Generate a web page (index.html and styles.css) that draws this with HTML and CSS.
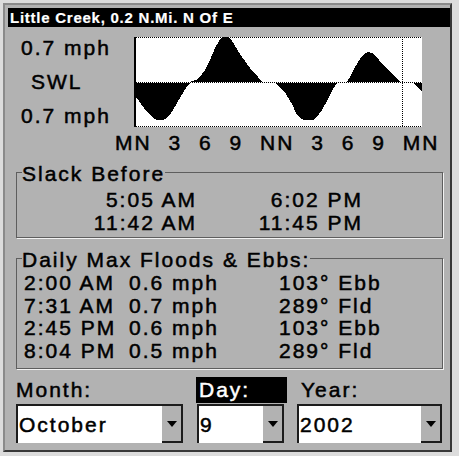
FILE: index.html
```html
<!DOCTYPE html>
<html>
<head>
<meta charset="utf-8">
<title>Tide Currents</title>
<link rel="stylesheet" href="styles.css">
</head>
<body>
<div class="screen">
  <div class="title">Little Creek, 0.2 N.Mi. N Of E</div>
  <div class="chart-row">
    <div class="scale">
      <div>0.7 mph</div>
      <div class="swl">SWL</div>
      <div>0.7 mph</div>
    </div>
    <svg class="chart" width="288" height="90" viewBox="0 0 288 90">
      <rect width="288" height="90" fill="#fff"/>
      <path fill="#000" shape-rendering="crispEdges" d="M0 46 L0 58 L5 64 L10 71 L15 77 L19 81 L23 83 L29 83 L33 81 L37 76 L42 68 L47 59 L52 51 L56 46 Z
        M55 45 L62 43 L66 40 L71 33 L76 23 L81 11 L85 4 L88 0 L95 0 L98 4 L106 17 L116 31 L124 40 L128 45 Z
        M142 46 L152 57 L158 67 L162 76 L166 81 L170 83 L179 83 L183 80 L188 73 L194 62 L199 52 L203 46 Z
        M213 45 L216 40 L221 30 L226 22 L230 17 L234 15 L238 16 L245 23 L252 31 L259 38 L265 44 L267 45 Z
        M279 46 L288 54 L288 46 Z"/>
      <rect x="0" y="0" width="2" height="90" fill="#000"/>
      <path fill="none" stroke="#000" stroke-width="1" stroke-dasharray="1 1" shape-rendering="crispEdges" d="M2 0.5 H288 M2 45.5 H288 M2 89.5 H288 M268.5 0 V90"/>
    </svg>
  </div>
  <div class="axis">MN 3 6 9 NN 3 6 9 MN</div>
  <fieldset class="group slack">
    <legend>Slack Before</legend>
    <div class="rows">
      <span>5:05 AM</span><span>6:02 PM</span>
      <span>11:42 AM</span><span>11:45 PM</span>
    </div>
  </fieldset>
  <fieldset class="group daily">
    <legend>Daily Max Floods &amp; Ebbs:</legend>
    <div class="rows">
      <span>2:00 AM</span><span>0.6 mph</span><span>103° Ebb</span>
      <span>7:31 AM</span><span>0.7 mph</span><span>289° Fld</span>
      <span>2:45 PM</span><span>0.6 mph</span><span>103° Ebb</span>
      <span>8:04 PM</span><span>0.5 mph</span><span>289° Fld</span>
    </div>
  </fieldset>
  <div class="date-row">
    <div class="field month">
      <div class="label">Month:</div>
      <div class="select"><span class="value">October</span><span class="btn"><i class="arrow"></i></span></div>
    </div>
    <div class="field day">
      <div class="label">Day:</div>
      <div class="select"><span class="value">9</span><span class="btn"><i class="arrow"></i></span></div>
    </div>
    <div class="field year">
      <div class="label">Year:</div>
      <div class="select"><span class="value">2002</span><span class="btn"><i class="arrow"></i></span></div>
    </div>
  </div>
</div>
</body>
</html>
```
FILE: styles.css
```css
* { box-sizing: border-box; }

body {
  margin: 0;
  background: #dcdcdc;
  font-family: "Liberation Sans", Arial, sans-serif;
}

.screen {
  margin: 3px 0 0 3px;
  width: 449px;
  height: 449px;
  border: 2px solid;
  border-color: #8a8a8a #383838 #383838 #8a8a8a;
  background: #b2b2b2;
  color: #000;
  font-size: 21px;
  letter-spacing: 2px;
  -webkit-text-stroke-width: 0.5px;
  overflow: hidden;
}

.title {
  margin: 3px 0 0 3px;
  height: 19px;
  line-height: 19px;
  padding-left: 2px;
  background: #000;
  color: #fff;
  font-weight: bold;
  font-size: 15px;
  letter-spacing: 0.75px;
  white-space: nowrap;
  -webkit-text-stroke-width: 0.2px;
}

.chart-row {
  display: flex;
  margin-top: 4px;
}

.scale {
  width: 129px;
  line-height: 34px;
  padding-left: 16px;
  white-space: nowrap;
}

.swl { padding-left: 10px; }

.chart {
  display: block;
  margin-top: 6px;
}

.axis {
  height: 20px;
  line-height: 20px;
  padding-left: 110px;
  word-spacing: 9px;
  white-space: nowrap;
}

.group {
  margin: 8px 0 0 11px;
  width: 427px;
  min-width: 0;
  padding: 0;
  border: 1px solid #5e5e5e;
  box-shadow: 1px 1px 0 #f2f2f2;
}

.group legend {
  margin-left: 5px;
  padding: 2px 0 0 0;
  line-height: 21px;
  white-space: nowrap;
}

.slack .rows {
  display: grid;
  grid-template-columns: 180px 166px;
  justify-items: end;
  padding: 4px 0 3px 0;
  line-height: 23px;
  white-space: nowrap;
}

.daily { margin-top: 9px; }

.daily .rows {
  display: grid;
  grid-template-columns: 105px 150px auto;
  padding: 2px 0 6px 7px;
  line-height: 22.5px;
  white-space: nowrap;
}

.date-row {
  display: flex;
  margin: 8px 0 0 11px;
}

.month { width: 167px; }
.day { width: 91px; margin-left: 13px; }
.year { width: 145px; margin-left: 10px; }

.label {
  height: 26px;
  line-height: 26px;
  white-space: nowrap;
}

.day .label {
  background: #000;
  color: #fff;
  padding-left: 3px;
}

.year .label { padding-left: 4px; }

.select {
  display: flex;
  height: 39px;
  margin-top: 1px;
  border-top: 2px solid #1c1c1c;
  border-left: 2px solid #1c1c1c;
  background: #fff;
}

.day .select {
  margin-left: 1px;
  width: 87px;
}

.value {
  flex: 1;
  line-height: 37px;
  padding-left: 1px;
}

.btn {
  width: 21px;
  background: #b2b2b2;
  border-right: 2px solid #1c1c1c;
  border-bottom: 2px solid #1c1c1c;
  display: flex;
  align-items: center;
  justify-content: center;
}

.arrow {
  width: 0;
  height: 0;
  border-left: 5.5px solid transparent;
  border-right: 5.5px solid transparent;
  border-top: 6px solid #000;
}
```
